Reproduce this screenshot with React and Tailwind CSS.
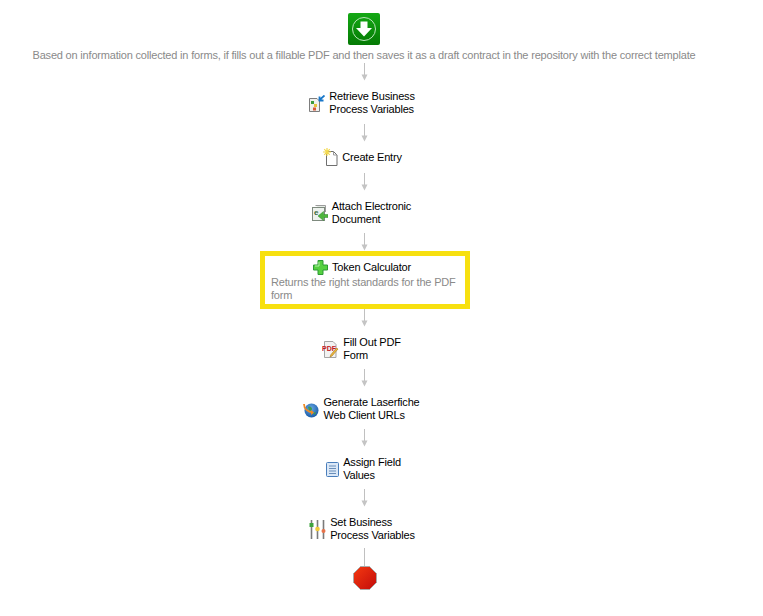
function Arrow({ className = "" }) {
  return (
    <svg width="9" height="18" viewBox="0 0 9 18" className={`block ${className}`}>
      <path d="M4.5 0V12" stroke="#c0c0c0" strokeWidth="1" fill="none" />
      <path d="M1.5 11.5H7.5L4.5 17.5Z" fill="#c4c4c4" />
    </svg>
  );
}

function StartIcon() {
  return (
    <svg width="32" height="32" viewBox="0 0 32 32" className="block">
      <defs>
        <linearGradient id="startBg" x1="0" y1="0" x2="0" y2="1">
          <stop offset="0" stopColor="#14a814" />
          <stop offset="1" stopColor="#047a04" />
        </linearGradient>
      </defs>
      <rect x="0" y="0" width="32" height="32" rx="2" fill="url(#startBg)" />
      <circle cx="16" cy="16" r="11.5" fill="none" stroke="#b9e4b9" strokeWidth="1" />
      <path d="M12.5 8.5H19.5V15H24L16 23.5L8 15H12.5Z" fill="#fff" />
    </svg>
  );
}

function RetrieveIcon() {
  return (
    <svg width="16" height="17" viewBox="0 0 16 17" className="block">
      <path d="M0.5 3.5H8L10.5 6V16.5H0.5Z" fill="#f0f0ee" stroke="#7d7d7d" />
      <rect x="2" y="6" width="3" height="3" fill="#3d9a3d" />
      <rect x="5" y="9" width="3" height="3" fill="#e8c33c" />
      <rect x="4" y="12.5" width="3" height="3" fill="#d9583a" />
      <path d="M15.5 0.5L11 4.5M10.5 1.5V5.5H14.5" stroke="#1877c9" strokeWidth="1.8" fill="none" />
    </svg>
  );
}

function CreateIcon() {
  return (
    <svg width="15" height="18" viewBox="0 0 15 18" className="block">
      <path d="M3.5 3.5H10.5L14 7V17.5H3.5Z" fill="#fff" stroke="#6f6f6f" />
      <path d="M10.5 3.5V7H14" fill="none" stroke="#9a9a9a" />
      <path d="M4 0V8M0 4H8M1.2 1.2L6.8 6.8M6.8 1.2L1.2 6.8" stroke="#f4d94e" strokeWidth="1.2" />
    </svg>
  );
}

function AttachIcon() {
  return (
    <svg width="16" height="16" viewBox="0 0 16 16" className="block">
      <path d="M3.5 0.5H13.5V7" fill="#e4ebe4" stroke="#9b9b9b" />
      <rect x="0.5" y="2.5" width="12" height="13" fill="#eef2ee" stroke="#7e8a7e" />
      <text x="2" y="9.5" fontSize="8" fontWeight="700" fill="#37693a" fontFamily="Liberation Sans, sans-serif">e</text>
      <path d="M16 9.5V12.5H11.5V15.5L6 11L11.5 6.5V9.5Z" fill="#4db53c" stroke="#2d8a2a" strokeWidth="0.5" />
    </svg>
  );
}

function PlusIcon() {
  return (
    <svg width="15" height="15" viewBox="0 0 15 15" className="block">
      <path d="M5 0.5H10V5H14.5V10H10V14.5H5V10H0.5V5H5Z" fill="#55d040" stroke="#2c9a34" strokeWidth="1" strokeLinejoin="round" />
      <path d="M6 2V6H2" fill="none" stroke="#b3f0a5" strokeWidth="1" />
    </svg>
  );
}

function PdfIcon() {
  return (
    <svg width="17" height="17" viewBox="0 0 17 17" className="block">
      <path d="M2.5 0.5H11L14 3.5V16.5H2.5Z" fill="#f2f2f2" stroke="#a5a5a5" />
      <text x="0" y="9.5" fontSize="7" fontWeight="700" fill="#c4161c" fontFamily="Liberation Sans, sans-serif">PDF</text>
      <path d="M16 8L10 15L8 16L9 13.5L14.5 7Z" fill="#f0b93c" stroke="#a3761c" strokeWidth="0.6" />
    </svg>
  );
}

function GlobeIcon() {
  return (
    <svg width="16" height="17" viewBox="0 0 16 17" className="block">
      <defs>
        <radialGradient id="globeBg" cx="0.45" cy="0.35" r="0.75">
          <stop offset="0" stopColor="#69a9e6" />
          <stop offset="1" stopColor="#0d4f9e" />
        </radialGradient>
      </defs>
      <circle cx="8.5" cy="9.5" r="7" fill="url(#globeBg)" />
      <path d="M5 6C7 5 9 6 9 8S7 10 6 9.5M10 12L13 11L12 14Z" fill="#3f9a4e" />
      <path d="M1 3C1 8 5 11 10 11.5" fill="none" stroke="#ee8a25" strokeWidth="1.8" />
      <path d="M8 9L11 11.5L8 14Z" fill="#ee8a25" />
    </svg>
  );
}

function AssignIcon() {
  return (
    <svg width="13" height="15" viewBox="0 0 13 15" className="block">
      <rect x="0.5" y="0.5" width="12" height="14" rx="1" fill="#dbe8f7" stroke="#4a7ebb" />
      <path d="M3 4H10M3 6.5H10M3 9H10M3 11.5H10" stroke="#6b8fba" strokeWidth="1" />
    </svg>
  );
}

function VariablesIcon() {
  return (
    <svg width="17" height="19" viewBox="0 0 17 19" className="block">
      <path d="M2.5 0V19M8.5 0V19M14.5 0V19" stroke="#7a7a7a" strokeWidth="1.6" />
      <rect x="0.5" y="3" width="4" height="4" fill="#3ea33e" />
      <circle cx="8.5" cy="9" r="2.3" fill="#f2ca3a" />
      <circle cx="14.5" cy="11" r="2" fill="#e8734a" />
    </svg>
  );
}

function StopIcon() {
  return (
    <svg width="24" height="24" viewBox="0 0 24 24" className="ml-[2px] block">
      <defs>
        <linearGradient id="stopBg" x1="0" y1="0" x2="1" y2="1">
          <stop offset="0" stopColor="#f53a10" />
          <stop offset="1" stopColor="#c20b0b" />
        </linearGradient>
      </defs>
      <path d="M7.5 0.5H16.5L23.5 7.5V16.5L16.5 23.5H7.5L0.5 16.5V7.5Z" fill="url(#stopBg)" stroke="#a9a9a9" strokeWidth="1" />
    </svg>
  );
}

function Step({ icon, lines, className = "" }) {
  return (
    <div className={`flex items-center justify-center gap-1 ${className}`}>
      {icon}
      <div className="whitespace-nowrap text-[11px] leading-[13px] tracking-[-0.19px] text-black">
        {lines.map((line) => (
          <div key={line}>{line}</div>
        ))}
      </div>
    </div>
  );
}

export default function App() {
  return (
    <div className="h-[616px] w-[763px] overflow-hidden bg-white font-['Liberation_Sans',Arial,sans-serif]">
      <div className="flex w-[728px] flex-col items-center pt-[13px]">
        <StartIcon />
        <p className="mt-[4px] whitespace-nowrap text-[11px] leading-[13px] tracking-[-0.19px] text-[#8a8a8a]">
          Based on information collected in forms, if fills out a fillable PDF and then saves it as a draft contract in the repository with the correct template
        </p>
        <Arrow className="mt-[1px]" />

        <Step className="mt-[9px] mr-[4px]" icon={<RetrieveIcon />} lines={["Retrieve Business", "Process Variables"]} />
        <Arrow className="mt-[8px]" />

        <Step className="mt-[6px] mr-[3px]" icon={<CreateIcon />} lines={["Create Entry"]} />
        <Arrow className="mt-[7px]" />

        <Step className="mt-[9px] mr-[5px]" icon={<AttachIcon />} lines={["Attach Electronic", "Document"]} />
        <Arrow className="mt-[7px]" />

        <div className="ml-[2px] h-[58px] w-[210px] border-[5px] border-[#f7e010] bg-white px-[6px] pt-[4px]">
          <Step className="mr-[6px]" icon={<PlusIcon />} lines={["Token Calculator"]} />
          <p className="mt-[1px] text-[11px] leading-[13px] tracking-[-0.19px] text-[#8a8a8a]">Returns the right standards for the PDF form</p>
        </div>
        <Arrow />

        <Step className="mt-[9px] mr-[5px]" icon={<PdfIcon />} lines={["Fill Out PDF", "Form"]} />
        <Arrow className="mt-[7px]" />

        <Step className="mt-[9px] mr-[5px]" icon={<GlobeIcon />} lines={["Generate Laserfiche", "Web Client URLs"]} />
        <Arrow className="mt-[7px]" />

        <Step className="mt-[9px] mr-[1px]" icon={<AssignIcon />} lines={["Assign Field", "Values"]} />
        <Arrow className="mt-[7px]" />

        <Step className="mt-[9px] mr-[4px]" icon={<VariablesIcon />} lines={["Set Business", "Process Variables"]} />
        <div className="mt-[6px] h-[18px] w-px bg-[#c0c0c0]" />
        <StopIcon />
      </div>
    </div>
  );
}
